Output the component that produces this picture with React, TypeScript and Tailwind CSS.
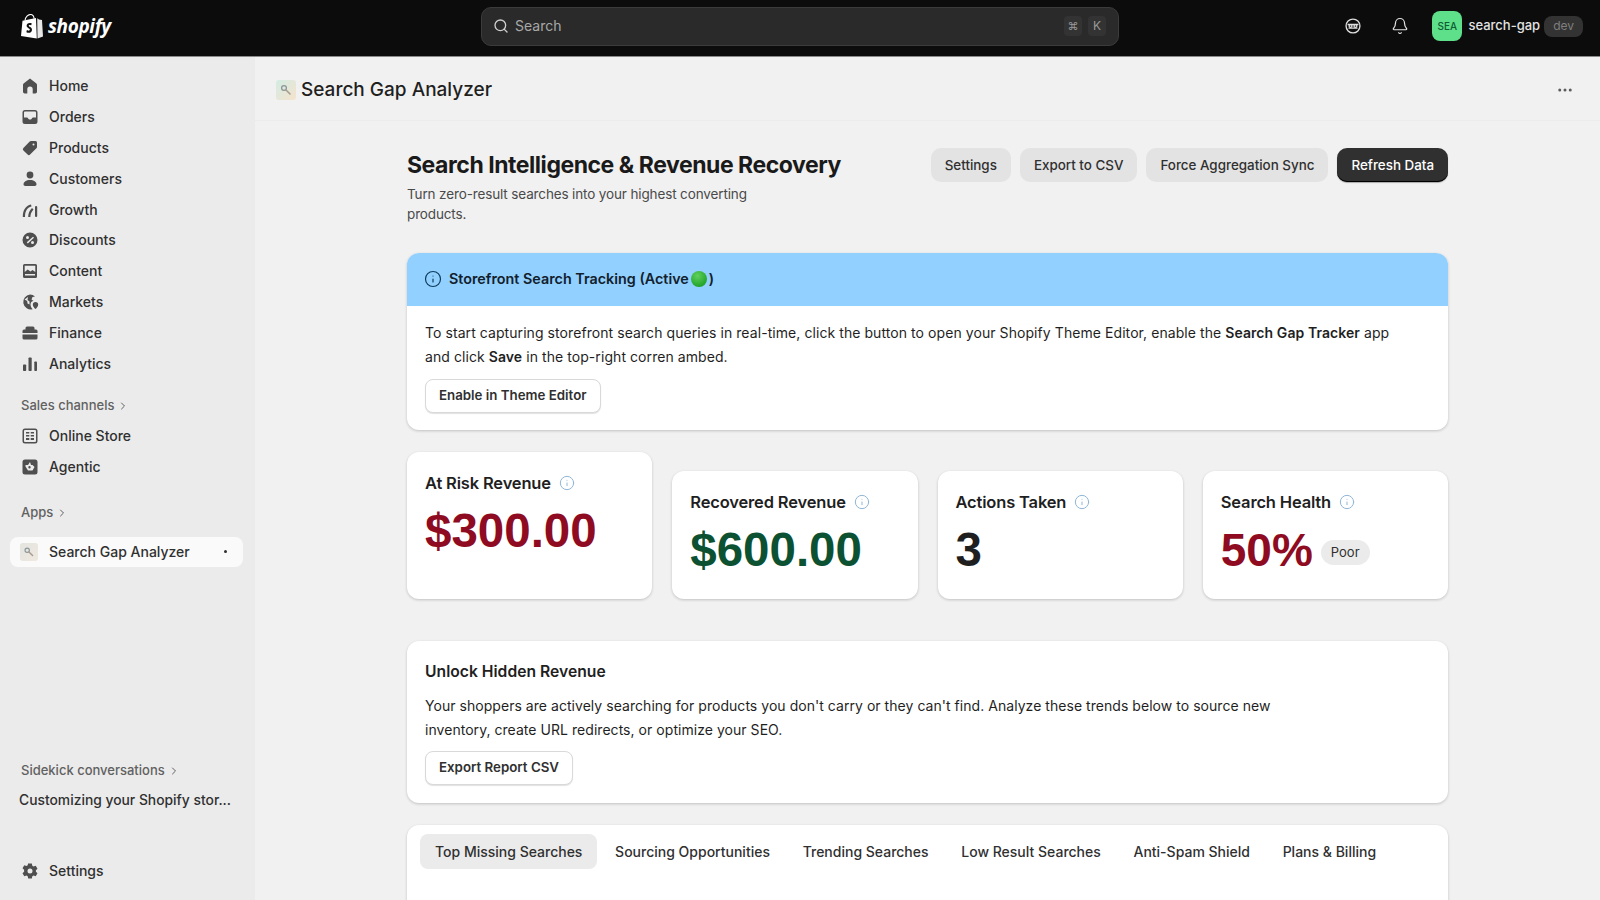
import { ChevronRight, Ellipsis, Search, Bell, Info } from 'lucide-react';
import type { ReactNode } from 'react';

const NavIcon = ({ children }: { children: ReactNode }) => (
  <svg viewBox="0 0 20 20" className="w-5 h-5 shrink-0 fill-[#4f4f4f]">
    {children}
  </svg>
);

const HomeIcon = () => (
  <NavIcon>
    <path d="M10 2.500 3.600 7.400A1.800 1.800 0 0 0 3 8.800v7a1.700 1.700 0 0 0 1.700 1.700h2.600v-4.200a2.700 2.700 0 0 1 5.400 0v4.200h2.600a1.700 1.700 0 0 0 1.700-1.700v-7a1.800 1.800 0 0 0-.6-1.400L10 2.500Z" />
  </NavIcon>
);
const OrdersIcon = () => (
  <NavIcon>
    <path
      fillRule="evenodd"
      d="M5 3h10a2.500 2.500 0 0 1 2.500 2.500v9A2.500 2.500 0 0 1 15 17H5a2.500 2.500 0 0 1-2.500-2.500v-9A2.500 2.500 0 0 1 5 3Zm-1 7.500h3c.5 0 .8.3 1 .7.3.7 1 1.300 2 1.300s1.700-.6 2-1.300c.2-.4.5-.7 1-.7h3V5.500a1 1 0 0 0-1-1H5a1 1 0 0 0-1 1v5Z"
    />
  </NavIcon>
);
const ProductsIcon = () => (
  <NavIcon>
    <path
      fillRule="evenodd"
      d="M11 3h4.500A1.500 1.500 0 0 1 17 4.500V9c0 .5-.2 1-.6 1.300l-6.300 6.300a1.800 1.800 0 0 1-2.500 0l-4.200-4.200a1.800 1.800 0 0 1 0-2.500l6.300-6.300C10 3.200 10.500 3 11 3Zm2.500 2.500a1 1 0 1 0 0 2 1 1 0 0 0 0-2Z"
    />
  </NavIcon>
);
const CustomersIcon = () => (
  <NavIcon>
    <circle cx="10" cy="6" r="3.400" />
    <path d="M10 11c-3.800 0-6.500 1.900-6.500 4.300 0 1 .8 1.700 1.700 1.700h9.600c.9 0 1.700-.7 1.700-1.700C16.500 12.900 13.800 11 10 11Z" />
  </NavIcon>
);
const GrowthIcon = () => (
  <NavIcon>
    <path d="M2.800 17c0-6.800 2.800-11.300 8.200-12.500l.5 2C7 7.600 5 11.300 5 17H2.800Z" />
    <path d="M8.200 17c0-3.600 1.300-6.500 3.800-9l1.500 1.400c-2 2.100-3.100 4.500-3.100 7.600H8.200Z" />
    <rect x="15" y="6" width="2.200" height="11" rx="1" />
  </NavIcon>
);
const DiscountsIcon = () => (
  <NavIcon>
    <path
      fillRule="evenodd"
      d="M10 2.500a7.500 7.500 0 1 1 0 15 7.500 7.500 0 0 1 0-15Zm3 4.200-6.200 5.600 1 1.100L14 7.800l-1-1.100ZM7.500 6a1.500 1.500 0 1 0 0 3 1.500 1.500 0 0 0 0-3Zm5 5a1.500 1.500 0 1 0 0 3 1.500 1.500 0 0 0 0-3Z"
    />
  </NavIcon>
);
const ContentIcon = () => (
  <NavIcon>
    <path
      fillRule="evenodd"
      d="M4.500 3h11A1.500 1.500 0 0 1 17 4.500v11a1.500 1.500 0 0 1-1.500 1.500h-11A1.500 1.500 0 0 1 3 15.500v-11A1.500 1.500 0 0 1 4.500 3Zm.2 1.700V11l3-2.500 2.800 2 2-1.400 2.800 1.900V4.700H4.700ZM5 13v1.500h10V13H5Z"
    />
  </NavIcon>
);
const MarketsIcon = () => (
  <NavIcon>
    <path
      fillRule="evenodd"
      d="M10 2.500a7.500 7.500 0 0 1 5 1.900l-2.500.6-1 2.500 2 1.500c-1.800.2-3 1.500-3 3.500 0 1.800.9 3.300 2.200 4.700A7.500 7.500 0 1 1 10 2.500ZM4.500 7.500 7.200 9l.3 2.500 2 1V9.500L7.500 8l.5-3-3.500 2.500Z"
    />
    <path d="M15.500 10a2.700 2.700 0 0 0-2.700 2.700c0 1.700 1.500 3.200 2.700 4.300 1.200-1.100 2.700-2.600 2.700-4.300A2.700 2.700 0 0 0 15.500 10Z" />
  </NavIcon>
);
const FinanceIcon = () => (
  <NavIcon>
    <path d="M7 3.500h6A1.500 1.500 0 0 1 14.500 5v1.500H16A1.500 1.500 0 0 1 17.500 8v2h-15V8A1.500 1.500 0 0 1 4 6.500h1.500V5A1.500 1.500 0 0 1 7 3.500Z" />
    <path d="M2.500 11.500h15V15a1.500 1.500 0 0 1-1.500 1.500H4A1.500 1.500 0 0 1 2.500 15v-3.500Z" />
  </NavIcon>
);
const AnalyticsIcon = () => (
  <NavIcon>
    <rect x="3" y="10.500" width="3.200" height="6.500" rx=".8" />
    <rect x="8.500" y="3.500" width="3.200" height="13.500" rx=".8" />
    <rect x="14.300" y="7.500" width="2.700" height="9.500" rx=".8" />
  </NavIcon>
);
const StoreIcon = () => (
  <NavIcon>
    <path
      fillRule="evenodd"
      d="M5 2.500h10A2.500 2.500 0 0 1 17.500 5v10a2.500 2.500 0 0 1-2.500 2.500H5A2.500 2.500 0 0 1 2.500 15V5A2.500 2.500 0 0 1 5 2.500Zm0 1.500a1 1 0 0 0-1 1v10a1 1 0 0 0 1 1h10a1 1 0 0 0 1-1V5a1 1 0 0 0-1-1H5Zm1 2h3.300v1.500H6V6Zm4.700 0H14v1.500h-3.300V6ZM6 9h3.300v1.500H6V9Zm4.700 0H14v1.500h-3.300V9ZM6 12h3.300v2H6v-2Zm4.700 0H14v2h-3.300v-2Z"
    />
  </NavIcon>
);
const AgenticIcon = () => (
  <NavIcon>
    <path
      fillRule="evenodd"
      d="M5 2.500h10A2.500 2.500 0 0 1 17.500 5v10a2.500 2.500 0 0 1-2.500 2.500H5A2.500 2.500 0 0 1 2.500 15V5A2.500 2.500 0 0 1 5 2.500ZM10 5 8 8H5.500v1.500L8 13.500h4.500l2-3.500-2-2H11L10 5Zm-.5 4a1.200 1.200 0 1 0 0 2.400 1.200 1.200 0 0 0 0-2.400Z"
    />
  </NavIcon>
);
const SettingsIcon = () => (
  <NavIcon>
    <path
      fillRule="evenodd"
      d="M8.200 2.500h3.600l.5 2.200 1.300.7 2.100-.7 1.800 3.100-1.600 1.500v1.400l1.600 1.500-1.800 3.100-2.100-.7-1.300.7-.5 2.200H8.200l-.5-2.200-1.300-.7-2.100.7-1.800-3.100 1.600-1.500V8.800L2.500 7.300l1.800-3.100 2.100.7 1.300-.7.5-2.200ZM10 7.500a2.500 2.500 0 1 0 0 5 2.500 2.500 0 0 0 0-5Z"
    />
  </NavIcon>
);

const AppGlyph = ({ size }: { size: 'sm' | 'lg' }) => (
  <svg viewBox="0 0 20 20" className={size === 'lg' ? 'w-5 h-5 shrink-0' : 'w-[18px] h-[18px] shrink-0'}>
    <defs>
      <linearGradient id={`glyph-${size}`} x1="0" y1="0" x2="1" y2="1">
        <stop offset="0" stopColor={size === 'lg' ? '#d3ece4' : '#e4e4e0'} />
        <stop offset="1" stopColor={size === 'lg' ? '#f5e3cc' : '#efe9df'} />
      </linearGradient>
    </defs>
    <rect width="20" height="20" rx="3" fill={`url(#glyph-${size})`} />
    <circle cx="8" cy="8" r="2.400" fill="none" stroke="#8a979b" strokeWidth="1.300" />
    <path d="M10 10l4 4" stroke="#a89c92" strokeWidth="1.600" strokeLinecap="round" />
  </svg>
);

const SupportIcon = () => (
  <svg viewBox="0 0 20 20" className="w-[18px] h-[18px] fill-none stroke-[#dedede]" strokeWidth="1.500">
    <circle cx="10" cy="10" r="7.700" />
    <path d="M4 8.300h12M5 12.300h10" />
    <circle cx="7.300" cy="10" r="1.600" />
    <circle cx="12.700" cy="10" r="1.600" />
  </svg>
);

const ShopifyBag = () => (
  <svg viewBox="0 0 22 25" className="w-[22px] h-[25px]">
    <path
      d="M4 6.500c.4-3.500 3-6 5.700-6 1.700 0 3 1.200 3.500 4.200"
      fill="none"
      stroke="#fff"
      strokeWidth="1.100"
    />
    <path d="M1.500 6.800 15 4l.8 20.500L0 22 1.500 6.800Z" fill="#fff" />
    <path d="M16.200 4.300 18 5.500l3 .5 1 16.500-5.500 2-.3-20.200Z" fill="#e8e8e8" />
    <path
      d="M10.800 9.400c-.6-.3-1.300-.4-2-.4-2 0-3.200 1.300-3.200 2.700 0 2.200 3.300 2.500 3.300 3.900 0 .7-.5 1.100-1.200 1.100-.9 0-1.800-.6-1.800-.6l-.5 1.800s.8.900 2.400.9c1.800 0 3.200-1.200 3.200-3.100 0-2.600-3.300-2.900-3.300-3.900 0-.4.300-.9 1.100-.9.700 0 1.400.3 1.400.3l.6-1.800Z"
      fill="#111"
    />
  </svg>
);

const primaryNav = [
  { label: 'Home', icon: HomeIcon },
  { label: 'Orders', icon: OrdersIcon },
  { label: 'Products', icon: ProductsIcon },
  { label: 'Customers', icon: CustomersIcon },
  { label: 'Growth', icon: GrowthIcon },
  { label: 'Discounts', icon: DiscountsIcon },
  { label: 'Content', icon: ContentIcon },
  { label: 'Markets', icon: MarketsIcon },
  { label: 'Finance', icon: FinanceIcon },
  { label: 'Analytics', icon: AnalyticsIcon },
];

const channelNav = [
  { label: 'Online Store', icon: StoreIcon },
  { label: 'Agentic', icon: AgenticIcon },
];

const tabs = [
  'Top Missing Searches',
  'Sourcing Opportunities',
  'Trending Searches',
  'Low Result Searches',
  'Anti-Spam Shield',
  'Plans & Billing',
];

const NavRow = ({ label, icon: Icon }: { label: string; icon: () => ReactNode }) => (
  <div className="flex items-center gap-[9px] h-[30.8px] pl-5 text-sm font-medium text-[#303030]">
    <Icon />
    <span>{label}</span>
  </div>
);

const SectionLabel = ({ label }: { label: string }) => (
  <div className="flex items-center gap-[3px] pl-[21px] text-[13px] font-medium text-[#616161]">
    <span>{label}</span>
    <ChevronRight className="w-3 h-3" strokeWidth={2} />
  </div>
);

const Button = ({ children }: { children: ReactNode }) => (
  <button className="h-[34px] px-[13px] rounded-lg bg-white border border-[#d9d9d9] shadow-[0_1px_1px_rgba(0,0,0,0.12)] text-[13.3px] font-semibold text-[#303030]">
    {children}
  </button>
);

const HeaderButton = ({ children }: { children: ReactNode }) => (
  <button className="h-[34px] px-[14px] rounded-[10px] bg-[#e3e3e3] text-[13.400px] font-medium text-[#303030]">
    {children}
  </button>
);

const StatCard = ({
  title,
  tall,
  children,
}: {
  title: string;
  tall?: boolean;
  children: ReactNode;
}) => (
  <div
    className={`flex-1 px-[18px] pt-[20px] bg-white rounded-xl shadow-[0_1px_3px_rgba(0,0,0,0.2)] ${
      tall ? 'h-[147px]' : 'h-[128px]'
    }`}
  >
    <div className="flex items-center gap-2 h-[22px] text-[16.500px] font-semibold text-[#1f1f1f] tracking-[-0.01em]">
      <span>{title}</span>
      <Info className="w-4 h-4 text-[#8fb6d6]" strokeWidth={1.5} />
    </div>
    <div className="flex items-center gap-2 mt-[10px] h-[54px]">{children}</div>
  </div>
);

const App = () => {
  return (
    <div className="flex flex-col h-[900px] overflow-hidden bg-[#f1f1f1] font-['Inter',sans-serif] text-[#303030]">
      {/* Top bar */}
      <header className="flex items-center h-[57px] shrink-0 pb-1 bg-[#0c0c0c] border-b border-[#8a8a8a]">
        <div className="flex items-center gap-[5px] w-[481px] pl-[21px] shrink-0">
          <ShopifyBag />
          <span className="font-['Open_Sans',sans-serif] italic font-bold text-[19px] leading-none text-white tracking-[-0.02em]">
            shopify
          </span>
        </div>
        <div className="flex items-center gap-1.5 w-[638px] h-[39px] pl-[11px] pr-3 rounded-[10px] bg-[#2a2a2a] border border-[#3b3b3b]">
          <Search className="w-4 h-4 text-[#cfcfcf]" strokeWidth={2} />
          <span className="text-sm text-[#a8a8a8]">Search</span>
          <div className="flex items-center gap-1.5 ml-auto text-[11px] text-[#9a9a9a]">
            <span className="flex items-center justify-center w-[18px] h-[20px] rounded bg-[#333333]">⌘</span>
            <span className="flex items-center justify-center w-[18px] h-[20px] rounded bg-[#333333] text-xs">K</span>
          </div>
        </div>
        <div className="flex items-center ml-auto pr-[17px]">
          <SupportIcon />
          <Bell className="w-[18px] h-[18px] ml-[29px] text-[#e4e4e4]" strokeWidth={1.6} />
          <div className="flex items-center justify-center w-[30px] h-[30px] ml-[23px] rounded-lg bg-[#5ee08a] text-[10px] font-medium text-[#0f5c32]">
            SEA
          </div>
          <span className="ml-[6px] text-[13px] font-medium text-[#e3e3e3]">search-gap</span>
          <span className="flex items-center ml-1 h-[21px] px-[9px] rounded-lg bg-[#333333] text-xs text-[#7f7f7f]">dev</span>
        </div>
      </header>

      <div className="flex flex-1 min-h-0">
        {/* Sidebar */}
        <aside className="flex flex-col w-[255px] shrink-0 bg-[#ebebeb] pt-[14px] pb-[14px]">
          {primaryNav.map((item) => (
            <NavRow key={item.label} {...item} />
          ))}
          <div className="mt-[17px] mb-[5px]">
            <SectionLabel label="Sales channels" />
          </div>
          {channelNav.map((item) => (
            <NavRow key={item.label} {...item} />
          ))}
          <div className="mt-[21px]">
            <SectionLabel label="Apps" />
          </div>
          <div className="flex items-center gap-[11px] h-[30px] mt-[14px] ml-[10px] mr-3 pl-[10px] pr-[16px] rounded-lg bg-[#fafafa] text-sm font-medium text-[#303030]">
            <AppGlyph size="sm" />
            <span>Search Gap Analyzer</span>
            <span className="ml-auto w-[3px] h-[3px] rounded-full bg-[#303030]" />
          </div>
          <div className="mt-auto">
            <SectionLabel label="Sidekick conversations" />
            <div className="mt-[10px] pl-[19px] text-[13.850px] font-medium text-[#303030]">
              Customizing your Shopify stor...
            </div>
          </div>
          <div className="mt-[44px]">
            <NavRow label="Settings" icon={SettingsIcon} />
          </div>
        </aside>

        {/* Main */}
        <main className="flex-1 min-w-0 overflow-hidden">
          <div className="flex items-center h-[64px] pl-[21px] pr-[26px] pt-[3px] border-b border-[#ececec]">
            <AppGlyph size="lg" />
            <h1 className="ml-[5px] text-[19px] font-medium text-[#1f1f1f]">Search Gap Analyzer</h1>
            <Ellipsis className="ml-auto w-[18px] h-[18px] text-[#5c5c5c]" strokeWidth={2} />
          </div>

          <div className="w-[1041px] ml-[152px] mt-[28px]">
            <div className="flex items-start justify-between h-[69px]">
              <div>
                <h2 className="text-[23px] leading-[33px] font-bold text-[#1a1a1a] tracking-[-0.02em]">
                  Search Intelligence &amp; Revenue Recovery
                </h2>
                <p className="w-[360px] mt-[2px] text-[13.500px] leading-5 text-[#4a4a4a] tracking-[-0.01em]">
                  Turn zero-result searches into your highest converting products.
                </p>
              </div>
              <div className="flex items-center gap-[9px] -mt-px">
                <HeaderButton>Settings</HeaderButton>
                <HeaderButton>Export to CSV</HeaderButton>
                <HeaderButton>Force Aggregation Sync</HeaderButton>
                <button className="h-[34px] px-[14px] rounded-[10px] bg-[#303030] shadow-[inset_0_-1px_0_#000,0_1px_1px_rgba(0,0,0,0.3)] text-[13.400px] font-medium text-white">
                  Refresh Data
                </button>
              </div>
            </div>

            {/* Tracking banner */}
            <section className="mt-[35px] h-[177px] bg-white rounded-xl overflow-hidden shadow-[0_1px_3px_rgba(0,0,0,0.2)]">
              <div className="flex items-center gap-[7px] h-[53px] pb-px px-[17px] bg-[#91d0ff] text-[14.350px] font-semibold text-[#12202c]">
                <Info className="w-[18px] h-[18px] text-[#0f3b5c]" strokeWidth={1.6} />
                <span className="flex items-center gap-[2px]">
                  Storefront Search Tracking (Active
                  <span className="w-4 h-4 rounded-full bg-[radial-gradient(circle_at_40%_30%,#5fd05f,#0d9414)]" />
                  )
                </span>
              </div>
              <div className="px-[18px] pt-[15px]">
                <p className="w-[990px] text-sm leading-6 text-[#1f1f1f] tracking-[0.005em]">
                  To start capturing storefront search queries in real-time, click the button to open your Shopify Theme Editor, enable the <b className="font-semibold">Search Gap Tracker</b> app and click <b className="font-semibold">Save</b> in the top-right corren ambed.
                </p>
                <div className="mt-[10px]">
                  <Button>Enable in Theme Editor</Button>
                </div>
              </div>
            </section>

            {/* Stats */}
            <div className="flex items-end gap-5 mt-[22px]">
              <StatCard title="At Risk Revenue" tall>
                <span className="font-['Liberation_Sans',sans-serif] text-[47.500px] font-bold text-[#8e0b21]">$300.00</span>
              </StatCard>
              <StatCard title="Recovered Revenue">
                <span className="font-['Liberation_Sans',sans-serif] text-[47.500px] font-bold text-[#0c5132]">$600.00</span>
              </StatCard>
              <StatCard title="Actions Taken">
                <span className="font-['Liberation_Sans',sans-serif] text-[47.500px] font-bold text-[#1f1f1f]">3</span>
              </StatCard>
              <StatCard title="Search Health">
                <span className="font-['Liberation_Sans',sans-serif] text-[46px] font-bold text-[#8e0b21]">50%</span>
                <span className="flex items-center h-[25px] mt-[5px] px-[10px] rounded-full bg-[#ebebeb] text-[13px] text-[#303030]">Poor</span>
              </StatCard>
            </div>

            {/* Unlock revenue */}
            <section className="mt-[42px] h-[162px] px-[18px] pt-[21px] bg-white rounded-xl shadow-[0_1px_3px_rgba(0,0,0,0.2)]">
              <h3 className="text-[15.700px] leading-5 font-semibold text-[#1f1f1f]">Unlock Hidden Revenue</h3>
              <p className="mt-[12px] w-[880px] text-sm leading-6 text-[#1f1f1f] tracking-[0.003em]">
                Your shoppers are actively searching for products you don't carry or they can't find. Analyze these trends below to source new inventory, create URL redirects, or optimize your SEO.
              </p>
              <div className="mt-[9px]">
                <Button>Export Report CSV</Button>
              </div>
            </section>

            {/* Tabs */}
            <section className="mt-[22px] h-[200px] px-[13px] pt-[9px] bg-white rounded-xl shadow-[0_1px_3px_rgba(0,0,0,0.2)]">
              <div className="flex items-center gap-[2.700px]">
                {tabs.map((tab, index) => (
                  <div
                    key={tab}
                    className={`flex items-center h-[35px] px-[15px] rounded-lg text-sm font-medium text-[#303030] ${
                      index === 0 ? 'bg-[#ebebeb]' : ''
                    }`}
                  >
                    {tab}
                  </div>
                ))}
              </div>
            </section>
          </div>
        </main>
      </div>
    </div>
  );
};

export default App;
